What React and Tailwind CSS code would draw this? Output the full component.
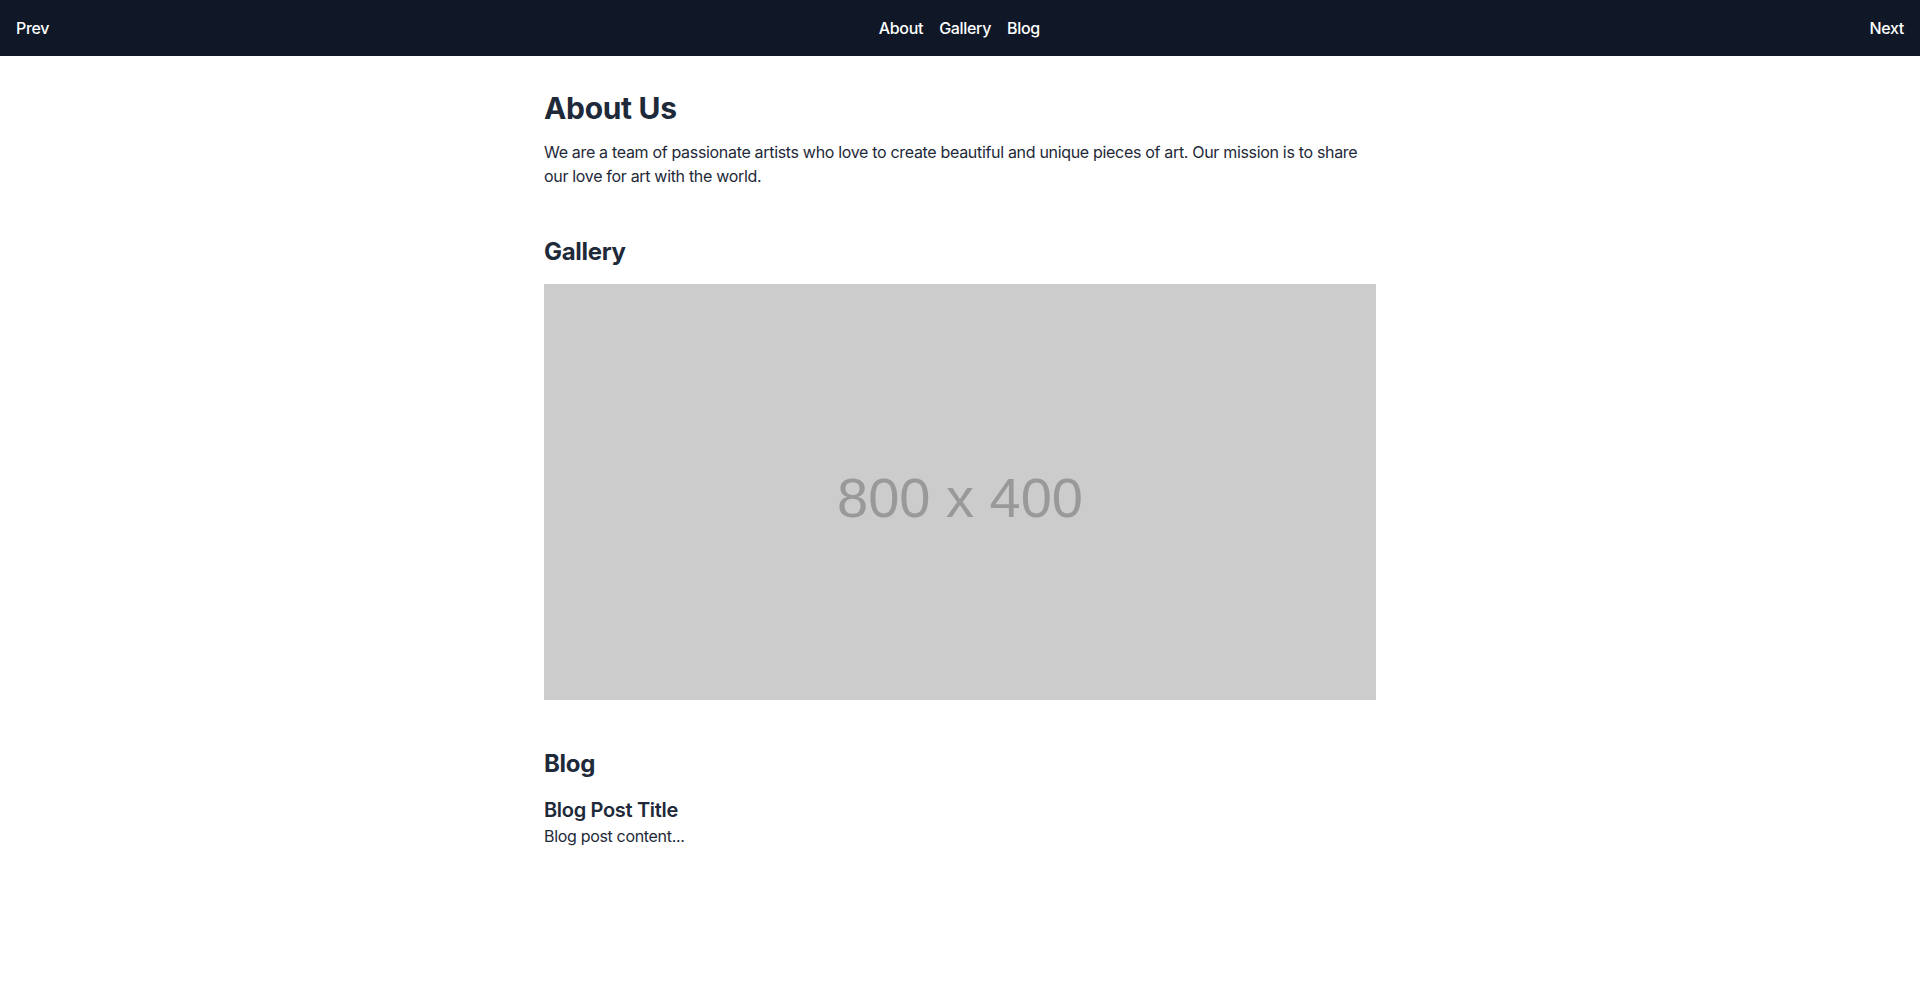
import React from 'react';

const navLinks = ['About', 'Gallery', 'Blog'];

const App = () => {
  return (
    <div className="min-h-screen bg-white text-gray-800 font-['Inter',sans-serif] tracking-[-0.02em]">
      {/* top bar */}
      <nav className="h-14 bg-gray-900 text-white flex items-center justify-between px-4">
        <a href="#" className="font-medium">Prev</a>
        <div className="flex items-center gap-4 font-medium">
          {navLinks.map((label) => (
            <a key={label} href="#">{label}</a>
          ))}
        </div>
        <a href="#" className="font-medium">Next</a>
      </nav>

      <main className="max-w-4xl mx-auto px-8 pt-[34px] pb-8">
        <section className="mb-12">
          <h1 className="text-3xl font-bold mb-3.5">About Us</h1>
          <p className="text-base leading-6">
            We are a team of passionate artists who love to create beautiful and unique pieces of art. Our mission is to share our love for art with the world.
          </p>
        </section>

        <section className="mb-12">
          <h2 className="text-2xl font-bold mb-4">Gallery</h2>
          <div className="w-full h-[416px] bg-[#cccccc] flex items-center justify-center pt-3">
            <span className="text-[56px] tracking-normal text-[#999999] font-['Liberation_Sans',Arial,sans-serif]">800 x 400</span>
          </div>
        </section>

        <section>
          <h2 className="text-2xl font-bold mb-4">Blog</h2>
          <div>
            <h3 className="text-xl font-semibold">Blog Post Title</h3>
            <p>Blog post content...</p>
          </div>
        </section>
      </main>
    </div>
  );
};

export default App;
